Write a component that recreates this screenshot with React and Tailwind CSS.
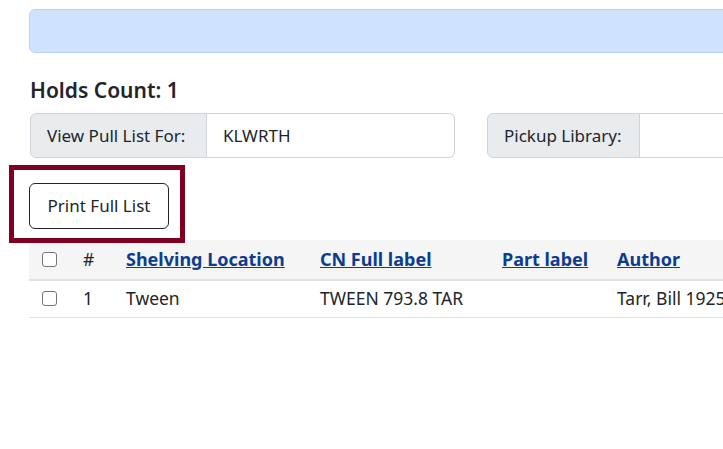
export default function App() {
  const cols = [
    { w: 'w-[41px]' },
    { w: 'w-[43px]' },
    { w: 'w-[194px]' },
    { w: 'w-[182px]' },
    { w: 'w-[115px]' },
  ];

  const Checkbox = () => (
    <span className="block w-[15px] h-[15px] rounded-[3px] border border-[#767676] bg-white"></span>
  );

  return (
    <div
      className="relative w-full h-[449px] overflow-hidden bg-white text-[#212529] text-[18px]"
      style={{ fontFamily: '"Segoe UI", "Noto Sans", sans-serif' }}
    >
      {/* alert */}
      <div className="ml-[29px] mt-[9px] -mr-[20px] h-[44px] rounded-md border border-[#b6d4fe] bg-[#cfe2ff]"></div>

      <h5 className="ml-[30px] mt-[24px] text-[21px] font-semibold leading-[27px]">Holds Count: 1</h5>

      {/* filters */}
      <div className="mt-[9px] ml-[30px] flex gap-[32px] whitespace-nowrap text-[17px]">
        <div className="flex h-[45px]">
          <span className="flex items-center w-[177px] px-[16px] rounded-l-md border border-[#ced4da] bg-[#e9ecef]">
            View Pull List For:
          </span>
          <span className="flex items-center w-[248px] px-[16px] rounded-r-md border border-l-0 border-[#ced4da] bg-white">
            KLWRTH
          </span>
        </div>
        <div className="flex h-[45px]">
          <span className="flex items-center w-[153px] px-[16px] rounded-l-md border border-[#ced4da] bg-[#e9ecef]">
            Pickup Library:
          </span>
          <span className="w-[200px] rounded-r-md border border-l-0 border-[#ced4da] bg-white"></span>
        </div>
      </div>

      {/* button */}
      <div className="ml-[29px] mt-[25px]">
        <button className="h-[46px] w-[140px] rounded-md border border-[#212529] bg-white text-[17px] text-[#212529]">
          Print Full List
        </button>
      </div>

      {/* table */}
      <div className="ml-[29px] mt-[11px] -mr-[40px] whitespace-nowrap">
        <div className="flex h-[41px] items-center pb-[1px] bg-[#f5f5f5] border-b-2 border-[#dee2e6] font-bold">
          <div className={`${cols[0].w} pl-[13px]`}><Checkbox /></div>
          <div className={`${cols[1].w} pl-[13px] font-normal text-[17.5px]`}>#</div>
          <div className={`${cols[2].w} pl-[13px]`}><a className="underline text-[#0b3d91]">Shelving Location</a></div>
          <div className={`${cols[3].w} pl-[13px]`}><a className="underline text-[#0b3d91]">CN Full label</a></div>
          <div className={`${cols[4].w} pl-[13px]`}><a className="underline text-[#0b3d91]">Part label</a></div>
          <div className="pl-[13px]"><a className="underline text-[#0b3d91]">Author</a></div>
        </div>
        <div className="flex h-[37px] items-center pb-[1px] border-b border-[#dee2e6] text-[17.5px]">
          <div className={`${cols[0].w} pl-[13px]`}><Checkbox /></div>
          <div className={`${cols[1].w} pl-[13px]`}>1</div>
          <div className={`${cols[2].w} pl-[13px]`}>Tween</div>
          <div className={`${cols[3].w} pl-[13px]`}>TWEEN 793.8 TAR</div>
          <div className={`${cols[4].w} pl-[13px]`}></div>
          <div className="pl-[13px]">Tarr, Bill 1925-</div>
        </div>
      </div>

      {/* highlight annotation */}
      <div className="absolute left-[9px] top-[165px] w-[176px] h-[78px] border-[5px] border-[#800020] pointer-events-none"></div>
    </div>
  );
}
